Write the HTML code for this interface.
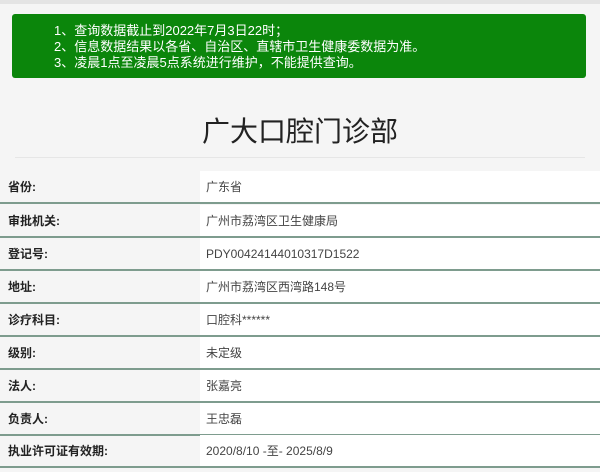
<!DOCTYPE html>
<html><head><meta charset="utf-8"><style>
body{margin:0;width:600px;height:472px;overflow:hidden;background:#f5f5f5;font-family:"Liberation Sans","Noto Sans CJK SC",sans-serif;}
.top{position:absolute;left:0;top:0;width:600px;height:4px;background:#e4e4e4}
.box{position:absolute;left:12px;top:14px;width:574px;height:64px;background:#0b860b;border-radius:3px;color:#fff;font-size:13px;}
.box div{position:absolute;left:42px;white-space:nowrap;line-height:15px}
h1{position:absolute;left:0;width:600px;top:113px;margin:0;text-align:center;font-weight:normal;font-size:28px;color:#222;line-height:38px}
.hr{position:absolute;left:15px;width:570px;top:157px;height:1px;background:#e6e6e6}
.row{position:absolute;left:0;width:600px;height:31px;border-bottom:2px solid #7e9c8e;font-size:12px;color:#333}
.row .l{position:absolute;left:8px;top:1px;line-height:31px;font-weight:bold;color:#222}
.row .v{position:absolute;left:200px;top:0;width:400px;height:31px;background:#fff;line-height:33px;padding-left:6px;box-sizing:border-box;color:#444}
</style></head><body>
<div class="top"></div>
<div class="box">
<div style="top:9px">1、查询数据截止到2022年7月3日22时；</div>
<div style="top:25px">2、信息数据结果以各省、自治区、直辖市卫生健康委数据为准。</div>
<div style="top:41px">3、凌晨1点至凌晨5点系统进行维护，不能提供查询。</div>
</div>
<h1>广大口腔门诊部</h1>
<div class="hr"></div>
<div class="row" style="top:171px"><span class="l">省份:</span><span class="v">广东省</span></div>
<div class="row" style="top:205px"><span class="l">审批机关:</span><span class="v">广州市荔湾区卫生健康局</span></div>
<div class="row" style="top:238px"><span class="l">登记号:</span><span class="v">PDY00424144010317D1522</span></div>
<div class="row" style="top:271px"><span class="l">地址:</span><span class="v">广州市荔湾区西湾路148号</span></div>
<div class="row" style="top:304px"><span class="l">诊疗科目:</span><span class="v">口腔科******</span></div>
<div class="row" style="top:337px"><span class="l">级别:</span><span class="v">未定级</span></div>
<div class="row" style="top:370px"><span class="l">法人:</span><span class="v">张嘉亮</span></div>
<div class="row" style="top:403px"><span class="l">负责人:</span><span class="v">王忠磊</span></div>
<div class="row" style="top:435px"><span class="l">执业许可证有效期:</span><span class="v">2020/8/10 -至- 2025/8/9</span></div>
</body></html>
